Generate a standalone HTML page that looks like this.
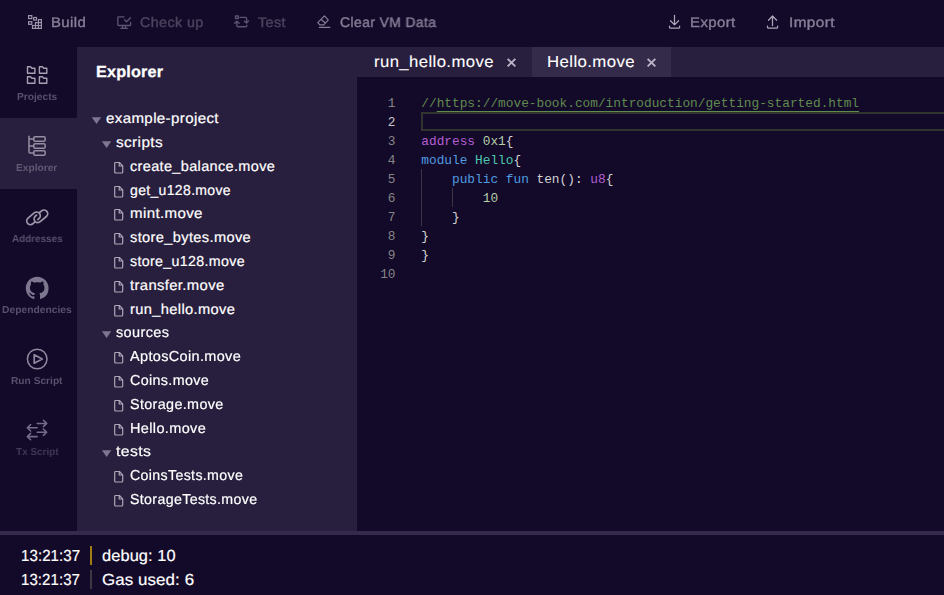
<!DOCTYPE html>
<html lang="en">
<head>
<meta charset="utf-8">
<title>Move Playground</title>
<style>
*{box-sizing:border-box;margin:0;padding:0}
html,body{width:944px;height:595px;overflow:hidden;background:#130929;font-family:"Liberation Sans",sans-serif;color:#fff}
body{position:relative}
.a,.t,svg{position:absolute}
.t{white-space:nowrap;line-height:20px;height:20px;transform-origin:0 50%}
.tb{font-size:14px;text-rendering:geometricPrecision;-webkit-text-stroke:0.4px currentColor;will-change:transform}
.on{color:#857f97}
.off{color:#4a445e}
.sl{font-size:10.2px;font-weight:bold;color:#57516c;text-rendering:geometricPrecision;will-change:transform}
#ptitle{font-size:16px;font-weight:bold;text-rendering:geometricPrecision;-webkit-text-stroke:0.3px #fff}
.r{font-size:14.4px;text-rendering:geometricPrecision;-webkit-text-stroke:0.2px #fff}
.tab{font-size:16px;text-rendering:geometricPrecision;-webkit-text-stroke:0.1px #fff}
.co{font-size:16px;text-rendering:geometricPrecision;-webkit-text-stroke:0.2px #fff}
#editor{font-family:"Liberation Mono",monospace;font-size:12.8px}
.ln{position:absolute;left:0;width:38.5px;text-align:right;color:#858585;height:19px;line-height:19px}
.ln.cur{color:#c6c6c6}
.cl{position:absolute;left:64.3px;height:19px;line-height:19px;white-space:pre;color:#d4d4d4}
.c{color:#608b4e}.c u{text-decoration:underline;text-underline-offset:4px;text-decoration-thickness:1px}
.k1{color:#b45fd2}.k2{color:#4f9de0}.n{color:#b5cea8}.ty{color:#4ec9b0}
svg{overflow:visible}
</style>
</head>
<body>
<div class="a" id="topbar" style="left:0;top:0;width:944px;height:47px;background:#130929">
</div>
<div class="t tb on" id="t_build" style="left:51px;top:12px;letter-spacing:0.40px;transform:scaleX(1.0652)">Build</div>
<div class="t tb off" id="t_check" style="left:140px;top:12px;letter-spacing:0.40px;transform:scaleX(1.0206)">Check up</div>
<div class="t tb off" id="t_test" style="left:258px;top:12px;letter-spacing:0.40px;transform:scaleX(1.0275)">Test</div>
<div class="t tb on" id="t_clear" style="left:340px;top:12px;letter-spacing:0.40px;transform:scaleX(0.9946)">Clear VM Data</div>
<div class="t tb on" id="t_export" style="left:690px;top:12px;letter-spacing:0.40px;transform:scaleX(1.0655)">Export</div>
<div class="t tb on" id="t_import" style="left:789px;top:12px;letter-spacing:0.40px;transform:scaleX(1.0922)">Import</div>
<svg style="left:27px;top:14px" width="17" height="17" viewBox="0 0 17 17" fill="none" stroke="#9b95a9" stroke-width="1.2" stroke-linecap="butt" stroke-linejoin="miter"><rect x="1.6" y="1.6" width="3.2" height="3"/><rect x="6.7" y="3.5" width="2.8" height="2.6"/><rect x="1.6" y="7.7" width="3.2" height="2.6"/>
<path d="M11.43 5.65H14.4V14.4H5.5V11.48H8.47V8.57H11.43Z M11.43 8.57H14.4 M8.47 11.48H14.4 M8.47 11.48V14.4 M11.43 8.57V14.4"/></svg>
<svg style="left:116px;top:14px" width="17" height="17" viewBox="0 0 17 17" fill="none" stroke="#5a5470" stroke-width="1.35" stroke-linecap="round" stroke-linejoin="round"><path d="M8 2.9H2.6Q1.8 2.9 1.8 3.7V10.7Q1.8 11.5 2.6 11.5H13.8Q14.6 11.5 14.6 10.7V8.4"/><path d="M6.6 11.5V14 M9.6 11.5V14 M4.8 14.3H11.4"/><path d="M8.6 5.8L10.6 7.8L14.4 3.8"/></svg>
<svg style="left:233px;top:14px" width="17" height="17" viewBox="0 0 17 17" fill="none" stroke="#5a5470" stroke-width="1.4" stroke-linecap="round" stroke-linejoin="round"><rect x="2.5" y="2" width="2.8" height="2.6"/><path d="M7.1 3.4H12.6Q13.6 3.4 13.6 4.4V8.6 M11.5 7.2L13.55 9L15.5 7.1"/><path d="M3.9 7.4V11.8Q3.9 12.8 4.9 12.8H12.8Q13.8 12.8 13.8 11.8V11.1 M1.7 9.3L3.9 7.3L6.2 9.3"/></svg>
<svg style="left:316px;top:14px" width="17" height="17" viewBox="0 0 17 17" fill="none" stroke="#857f97" stroke-width="1.15" stroke-linecap="round" stroke-linejoin="round"><path d="M8.4 1.9L12.3 5.9L7.8 10.9H3.8L1.8 8.7Z M5.1 5.3L9.4 9.2"/><path d="M3.4 13.4H13.8"/></svg>
<svg style="left:667px;top:14px" width="17" height="17" viewBox="0 0 17 17" fill="none" stroke="#aba6b9" stroke-width="1.25" stroke-linecap="round" stroke-linejoin="round"><path d="M7.5 1.3V10.8 M3.5 6.7L7.5 10.9L11.6 6.7"/><path d="M2.5 12V13.2Q2.5 14.15 3.5 14.15H11.6Q12.6 14.15 12.6 13.2V12"/></svg>
<svg style="left:765px;top:14px" width="17" height="17" viewBox="0 0 17 17" fill="none" stroke="#aba6b9" stroke-width="1.25" stroke-linecap="round" stroke-linejoin="round"><path d="M7.5 11.6V2 M3.5 6.3L7.5 2L11.6 6.3"/><path d="M2.5 12V13.2Q2.5 14.15 3.5 14.15H11.6Q12.6 14.15 12.6 13.2V12"/></svg>
<div class="a" id="sidebar" style="left:0;top:47px;width:77px;height:484px;background:#130929"></div>
<div class="a" id="sbactive" style="left:0;top:118px;width:77px;height:71px;background:#281e3d"></div>
<div class="t sl" id="s_projects" style="left:17px;top:88px;letter-spacing:0.00px;transform:scaleX(0.9970)">Projects</div>
<div class="t sl" id="s_explorer" style="left:16px;top:159px;letter-spacing:0.00px;transform:scaleX(0.9961);color:#605a74">Explorer</div>
<div class="t sl" id="s_addresses" style="left:12px;top:230px;letter-spacing:0.00px;transform:scaleX(0.9711)">Addresses</div>
<div class="t sl" id="s_deps" style="left:2px;top:301px;letter-spacing:0.00px;transform:scaleX(1.0102)">Dependencies</div>
<div class="t sl" id="s_run" style="left:11px;top:372px;letter-spacing:0.00px;transform:scaleX(0.9986)">Run Script</div>
<div class="t sl" id="s_tx" style="left:16px;top:443px;letter-spacing:0.00px;transform:scaleX(0.9761);color:#403a56">Tx Script</div>
<svg style="left:27px;top:66px" width="22" height="19" viewBox="0 0 22 19" fill="none" stroke="#a6a0b2" stroke-width="1.4" stroke-linecap="round" stroke-linejoin="round"><g transform="translate(0.5 0.7)"><path d="M0 0H3L4.4 1.5H7.4V6.5H0Z"/><path d="M0 0H3L4.4 1.5H7.4V6.5H0Z" transform="translate(11.9 0)"/><path d="M0 0H3L4.4 1.5H7.4V6.5H0Z" transform="translate(0 10.1)"/><path d="M0 0H3L4.4 1.5H7.4V6.5H0Z" transform="translate(11.9 10.1)"/></g></svg>
<svg style="left:27px;top:135px" width="22" height="23" viewBox="0 0 22 23" fill="none" stroke="#958fa3" stroke-width="1.5" stroke-linecap="round" stroke-linejoin="round"><path d="M2 1.2V16.95Q2 17.95 3 17.95H6.75 M2 3.95H6.75 M2 10.95H6.75"/><rect x="6.75" y="1.65" width="11.4" height="4.6" rx="1.3"/><rect x="6.75" y="8.65" width="11.4" height="4.6" rx="1.3"/><rect x="6.75" y="15.65" width="11.4" height="4.6" rx="1.3"/></svg>
<svg style="left:25px;top:206px" width="26" height="23" viewBox="0 0 26 23" fill="none" stroke="#9d97aa" stroke-width="1.75" stroke-linecap="round" stroke-linejoin="round"><g transform="translate(12.2 11.3) rotate(-40)"><path transform="translate(-3.5 -1.6)" d="M-1.4 3.7H-4A3.7 3.7 0 0 1 -4 -3.7H4A3.7 3.7 0 0 1 4 3.7H2.6"/><path transform="translate(3.5 1.6)" d="M1.4 -3.7H4A3.7 3.7 0 0 1 4 3.7H-4A3.7 3.7 0 0 1 -4 -3.7H-2.6"/></g></svg>
<svg style="left:25px;top:276px" width="24" height="24" viewBox="0 0 24 24" fill="#7d7790" stroke="none" stroke-width="0" stroke-linecap="round" stroke-linejoin="round"><g transform="translate(0.8 0.8)"><path transform="scale(1.425)" d="M8 0C3.58 0 0 3.58 0 8c0 3.54 2.29 6.53 5.47 7.59.4.07.55-.17.55-.38 0-.19-.01-.82-.01-1.49-2.01.37-2.53-.49-2.69-.94-.09-.23-.48-.94-.82-1.13-.28-.15-.68-.52-.01-.53.63-.01 1.08.58 1.23.82.72 1.21 1.87.87 2.33.66.07-.52.28-.87.51-1.07-1.78-.2-3.64-.89-3.64-3.95 0-.87.31-1.59.82-2.15-.08-.2-.36-1.02.08-2.12 0 0 .67-.21 2.2.82.64-.18 1.32-.27 2-.27.68 0 1.36.09 2 .27 1.53-1.04 2.2-.82 2.2-.82.44 1.1.16 1.92.08 2.12.51.56.82 1.27.82 2.15 0 3.07-1.87 3.75-3.65 3.95.29.25.54.73.54 1.48 0 1.07-.01 1.93-.01 2.2 0 .21.15.46.55.38A8.013 8.013 0 0016 8c0-4.42-3.58-8-8-8z"/></g></svg>
<svg style="left:25px;top:347px" width="26" height="26" viewBox="0 0 26 26" fill="none" stroke="#8f899f" stroke-width="1.5" stroke-linecap="round" stroke-linejoin="round"><circle cx="12.2" cy="12" r="9.8"/><path stroke-width="1.7" d="M9.2 7.7L17.2 12L9.2 16.3Z"/></svg>
<svg style="left:25px;top:418px" width="26" height="25" viewBox="0 0 26 25" fill="none" stroke="#736c88" stroke-width="1.55" stroke-linecap="round" stroke-linejoin="round"><path d="M12.2 5.4H21.6 M18.4 2.2L21.7 5.4L18.4 8.6"/><path d="M12.2 9.8H2.4 M5.6 6.6L2.3 9.8L5.6 13"/><path d="M12.2 14.2H21.6 M18.4 11L21.7 14.2L18.4 17.4"/><path d="M12.2 18.6H2.4 M5.6 15.4L2.3 18.6L5.6 21.8"/></svg>
<div class="a" id="panel" style="left:77px;top:47px;width:280px;height:484px;background:#281e3d"></div>
<div class="t " id="ptitle" style="left:96px;top:63px;letter-spacing:0.20px;transform:scaleX(1.0115)">Explorer</div>
<svg style="left:91px;top:117px" width="11" height="8" viewBox="0 0 11 8" fill="#7d7690" stroke="none" stroke-width="0" stroke-linecap="round" stroke-linejoin="round"><g transform="translate(0.8 0.3)"><path d="M0 0H9.4L4.7 6.6Z"/></g></svg>
<div class="t r" id="r0" style="left:106px;top:109px;letter-spacing:0.35px;transform:scaleX(1.0486)">example-project</div>
<svg style="left:101px;top:141px" width="11" height="8" viewBox="0 0 11 8" fill="#7d7690" stroke="none" stroke-width="0" stroke-linecap="round" stroke-linejoin="round"><g transform="translate(0.9 0.3)"><path d="M0 0H9.4L4.7 6.6Z"/></g></svg>
<div class="t r" id="r1" style="left:116px;top:133px;letter-spacing:0.35px;transform:scaleX(1.0682)">scripts</div>
<svg style="left:114px;top:161px" width="11" height="13" viewBox="0 0 11 13" fill="none" stroke="#aca7b8" stroke-width="1.2" stroke-linecap="round" stroke-linejoin="round"><g transform="translate(0 0.9)"><path d="M1.6 0.6H5.4L8.7 3.9V10.2A0.9 0.9 0 0 1 7.8 11.1H1.6A0.9 0.9 0 0 1 0.7 10.2V1.5A0.9 0.9 0 0 1 1.6 0.6Z M5.2 0.8V4.1H8.5"/></g></svg>
<div class="t r" id="r2" style="left:130px;top:157px;letter-spacing:0.35px;transform:scaleX(1.0062)">create_balance.move</div>
<svg style="left:114px;top:185px" width="11" height="13" viewBox="0 0 11 13" fill="none" stroke="#aca7b8" stroke-width="1.2" stroke-linecap="round" stroke-linejoin="round"><g transform="translate(0 0.9)"><path d="M1.6 0.6H5.4L8.7 3.9V10.2A0.9 0.9 0 0 1 7.8 11.1H1.6A0.9 0.9 0 0 1 0.7 10.2V1.5A0.9 0.9 0 0 1 1.6 0.6Z M5.2 0.8V4.1H8.5"/></g></svg>
<div class="t r" id="r3" style="left:130px;top:181px;letter-spacing:0.35px;transform:scaleX(0.9731)">get_u128.move</div>
<svg style="left:114px;top:208px" width="11" height="13" viewBox="0 0 11 13" fill="none" stroke="#aca7b8" stroke-width="1.2" stroke-linecap="round" stroke-linejoin="round"><g transform="translate(0 0.9)"><path d="M1.6 0.6H5.4L8.7 3.9V10.2A0.9 0.9 0 0 1 7.8 11.1H1.6A0.9 0.9 0 0 1 0.7 10.2V1.5A0.9 0.9 0 0 1 1.6 0.6Z M5.2 0.8V4.1H8.5"/></g></svg>
<div class="t r" id="r4" style="left:130px;top:204px;letter-spacing:0.35px;transform:scaleX(1.0481)">mint.move</div>
<svg style="left:114px;top:232px" width="11" height="13" viewBox="0 0 11 13" fill="none" stroke="#aca7b8" stroke-width="1.2" stroke-linecap="round" stroke-linejoin="round"><g transform="translate(0 0.9)"><path d="M1.6 0.6H5.4L8.7 3.9V10.2A0.9 0.9 0 0 1 7.8 11.1H1.6A0.9 0.9 0 0 1 0.7 10.2V1.5A0.9 0.9 0 0 1 1.6 0.6Z M5.2 0.8V4.1H8.5"/></g></svg>
<div class="t r" id="r5" style="left:130px;top:228px;letter-spacing:0.35px;transform:scaleX(1.0157)">store_bytes.move</div>
<svg style="left:114px;top:256px" width="11" height="13" viewBox="0 0 11 13" fill="none" stroke="#aca7b8" stroke-width="1.2" stroke-linecap="round" stroke-linejoin="round"><g transform="translate(0 0.9)"><path d="M1.6 0.6H5.4L8.7 3.9V10.2A0.9 0.9 0 0 1 7.8 11.1H1.6A0.9 0.9 0 0 1 0.7 10.2V1.5A0.9 0.9 0 0 1 1.6 0.6Z M5.2 0.8V4.1H8.5"/></g></svg>
<div class="t r" id="r6" style="left:130px;top:252px;letter-spacing:0.35px;transform:scaleX(0.9872)">store_u128.move</div>
<svg style="left:114px;top:280px" width="11" height="13" viewBox="0 0 11 13" fill="none" stroke="#aca7b8" stroke-width="1.2" stroke-linecap="round" stroke-linejoin="round"><g transform="translate(0 0.9)"><path d="M1.6 0.6H5.4L8.7 3.9V10.2A0.9 0.9 0 0 1 7.8 11.1H1.6A0.9 0.9 0 0 1 0.7 10.2V1.5A0.9 0.9 0 0 1 1.6 0.6Z M5.2 0.8V4.1H8.5"/></g></svg>
<div class="t r" id="r7" style="left:130px;top:276px;letter-spacing:0.35px;transform:scaleX(1.0304)">transfer.move</div>
<svg style="left:114px;top:304px" width="11" height="13" viewBox="0 0 11 13" fill="none" stroke="#aca7b8" stroke-width="1.2" stroke-linecap="round" stroke-linejoin="round"><g transform="translate(0 0.9)"><path d="M1.6 0.6H5.4L8.7 3.9V10.2A0.9 0.9 0 0 1 7.8 11.1H1.6A0.9 0.9 0 0 1 0.7 10.2V1.5A0.9 0.9 0 0 1 1.6 0.6Z M5.2 0.8V4.1H8.5"/></g></svg>
<div class="t r" id="r8" style="left:130px;top:300px;letter-spacing:0.35px;transform:scaleX(1.0192)">run_hello.move</div>
<svg style="left:101px;top:331px" width="11" height="8" viewBox="0 0 11 8" fill="#7d7690" stroke="none" stroke-width="0" stroke-linecap="round" stroke-linejoin="round"><g transform="translate(0.9 0.3)"><path d="M0 0H9.4L4.7 6.6Z"/></g></svg>
<div class="t r" id="r9" style="left:116px;top:323px;letter-spacing:0.35px;transform:scaleX(1.0089)">sources</div>
<svg style="left:114px;top:351px" width="11" height="13" viewBox="0 0 11 13" fill="none" stroke="#aca7b8" stroke-width="1.2" stroke-linecap="round" stroke-linejoin="round"><g transform="translate(0 0.9)"><path d="M1.6 0.6H5.4L8.7 3.9V10.2A0.9 0.9 0 0 1 7.8 11.1H1.6A0.9 0.9 0 0 1 0.7 10.2V1.5A0.9 0.9 0 0 1 1.6 0.6Z M5.2 0.8V4.1H8.5"/></g></svg>
<div class="t r" id="r10" style="left:130px;top:347px;letter-spacing:0.35px;transform:scaleX(1.0057)">AptosCoin.move</div>
<svg style="left:114px;top:375px" width="11" height="13" viewBox="0 0 11 13" fill="none" stroke="#aca7b8" stroke-width="1.2" stroke-linecap="round" stroke-linejoin="round"><g transform="translate(0 0.9)"><path d="M1.6 0.6H5.4L8.7 3.9V10.2A0.9 0.9 0 0 1 7.8 11.1H1.6A0.9 0.9 0 0 1 0.7 10.2V1.5A0.9 0.9 0 0 1 1.6 0.6Z M5.2 0.8V4.1H8.5"/></g></svg>
<div class="t r" id="r11" style="left:130px;top:371px;letter-spacing:0.35px;transform:scaleX(0.9941)">Coins.move</div>
<svg style="left:114px;top:399px" width="11" height="13" viewBox="0 0 11 13" fill="none" stroke="#aca7b8" stroke-width="1.2" stroke-linecap="round" stroke-linejoin="round"><g transform="translate(0 0.9)"><path d="M1.6 0.6H5.4L8.7 3.9V10.2A0.9 0.9 0 0 1 7.8 11.1H1.6A0.9 0.9 0 0 1 0.7 10.2V1.5A0.9 0.9 0 0 1 1.6 0.6Z M5.2 0.8V4.1H8.5"/></g></svg>
<div class="t r" id="r12" style="left:130px;top:395px;letter-spacing:0.35px;transform:scaleX(0.9977)">Storage.move</div>
<svg style="left:114px;top:423px" width="11" height="13" viewBox="0 0 11 13" fill="none" stroke="#aca7b8" stroke-width="1.2" stroke-linecap="round" stroke-linejoin="round"><g transform="translate(0 0.9)"><path d="M1.6 0.6H5.4L8.7 3.9V10.2A0.9 0.9 0 0 1 7.8 11.1H1.6A0.9 0.9 0 0 1 0.7 10.2V1.5A0.9 0.9 0 0 1 1.6 0.6Z M5.2 0.8V4.1H8.5"/></g></svg>
<div class="t r" id="r13" style="left:130px;top:419px;letter-spacing:0.35px;transform:scaleX(1.0082)">Hello.move</div>
<svg style="left:101px;top:450px" width="11" height="8" viewBox="0 0 11 8" fill="#7d7690" stroke="none" stroke-width="0" stroke-linecap="round" stroke-linejoin="round"><g transform="translate(0.9 0.3)"><path d="M0 0H9.4L4.7 6.6Z"/></g></svg>
<div class="t r" id="r14" style="left:116px;top:442px;letter-spacing:0.35px;transform:scaleX(1.0980)">tests</div>
<svg style="left:114px;top:470px" width="11" height="13" viewBox="0 0 11 13" fill="none" stroke="#aca7b8" stroke-width="1.2" stroke-linecap="round" stroke-linejoin="round"><g transform="translate(0 0.9)"><path d="M1.6 0.6H5.4L8.7 3.9V10.2A0.9 0.9 0 0 1 7.8 11.1H1.6A0.9 0.9 0 0 1 0.7 10.2V1.5A0.9 0.9 0 0 1 1.6 0.6Z M5.2 0.8V4.1H8.5"/></g></svg>
<div class="t r" id="r15" style="left:130px;top:466px;letter-spacing:0.35px;transform:scaleX(0.9856)">CoinsTests.move</div>
<svg style="left:114px;top:494px" width="11" height="13" viewBox="0 0 11 13" fill="none" stroke="#aca7b8" stroke-width="1.2" stroke-linecap="round" stroke-linejoin="round"><g transform="translate(0 0.9)"><path d="M1.6 0.6H5.4L8.7 3.9V10.2A0.9 0.9 0 0 1 7.8 11.1H1.6A0.9 0.9 0 0 1 0.7 10.2V1.5A0.9 0.9 0 0 1 1.6 0.6Z M5.2 0.8V4.1H8.5"/></g></svg>
<div class="t r" id="r16" style="left:130px;top:490px;letter-spacing:0.35px;transform:scaleX(0.9873)">StorageTests.move</div>
<div class="a" id="tabs" style="left:357px;top:47px;width:587px;height:30px;background:#281e3d"></div>
<div class="a" id="tabon" style="left:532px;top:47px;width:139px;height:30px;background:#342a4a"></div>
<div class="t tab" id="tab1" style="left:374px;top:53px;letter-spacing:0.40px;transform:scaleX(1.0422)">run_hello.move</div>
<div class="t tab" id="tab2" style="left:547px;top:53px;letter-spacing:0.40px;transform:scaleX(1.0477)">Hello.move</div>
<svg style="left:506px;top:57px" width="11" height="11" viewBox="0 0 11 11" fill="none" stroke="#b9b4c8" stroke-width="1.9" stroke-linecap="butt" stroke-linejoin="round"><g transform="translate(0.5 0.6)"><path d="M1.15 1.25L8.85 8.75 M8.85 1.25L1.15 8.75"/></g></svg>
<svg style="left:646px;top:57px" width="11" height="11" viewBox="0 0 11 11" fill="none" stroke="#b9b4c8" stroke-width="1.9" stroke-linecap="butt" stroke-linejoin="round"><g transform="translate(0.5 0.6)"><path d="M1.15 1.25L8.85 8.75 M8.85 1.25L1.15 8.75"/></g></svg>
<div class="a" id="editor" style="left:357px;top:77px;width:587px;height:454px;background:#130929">
<div class="a" id="curline" style="left:64px;top:35px;width:523px;height:19px;border:2px solid #313330;border-right:0"></div>
<div class="a" style="left:64px;top:92px;width:1px;height:57px;background:#3b3647"></div>
<div class="a" style="left:95px;top:111px;width:1px;height:19px;background:#3b3647"></div>
<div class="ln" style="top:17px">1</div><div class="cl" id="l1" style="top:17px"><span class="c">//<u>https://move-book.com/introduction/getting-started.html</u></span></div>
<div class="ln cur" style="top:36px">2</div><div class="cl" id="l2" style="top:36px"></div>
<div class="ln" style="top:55px">3</div><div class="cl" id="l3" style="top:55px"><span class="k1">address</span> <span class="n">0x1</span>{</div>
<div class="ln" style="top:74px">4</div><div class="cl" id="l4" style="top:74px"><span class="k2">module</span> <span class="ty">Hello</span>{</div>
<div class="ln" style="top:93px">5</div><div class="cl" id="l5" style="top:93px">    <span class="k2">public</span> <span class="k2">fun</span> ten(): <span class="k1">u8</span>{</div>
<div class="ln" style="top:112px">6</div><div class="cl" id="l6" style="top:112px">        <span class="n">10</span></div>
<div class="ln" style="top:131px">7</div><div class="cl" id="l7" style="top:131px">    }</div>
<div class="ln" style="top:150px">8</div><div class="cl" id="l8" style="top:150px">}</div>
<div class="ln" style="top:169px">9</div><div class="cl" id="l9" style="top:169px">}</div>
<div class="ln" style="top:188px">10</div><div class="cl" id="l10" style="top:188px"></div>
</div>
<div class="a" id="sep" style="left:0;top:531px;width:944px;height:4px;background:#35294c"></div>
<div class="a" id="console" style="left:0;top:535px;width:944px;height:60px;background:#130929"></div>
<div class="t co" id="c1" style="left:21px;top:547px;letter-spacing:0.10px;transform:scaleX(0.9383)">13:21:37</div>
<div class="t co" id="c1b" style="left:102px;top:547px;letter-spacing:0.10px;transform:scaleX(1.0238)">debug: 10</div>
<div class="t co" id="c2" style="left:21px;top:571px;letter-spacing:0.10px;transform:scaleX(0.9357)">13:21:37</div>
<div class="t co" id="c2b" style="left:102px;top:571px;letter-spacing:0.10px;transform:scaleX(1.0552)">Gas used: 6</div>
<div class="a" style="left:90px;top:546px;width:2px;height:19px;background:#a17c12"></div>
<div class="a" style="left:90px;top:570px;width:2px;height:19px;background:#3b3843"></div>
</body>
</html>
